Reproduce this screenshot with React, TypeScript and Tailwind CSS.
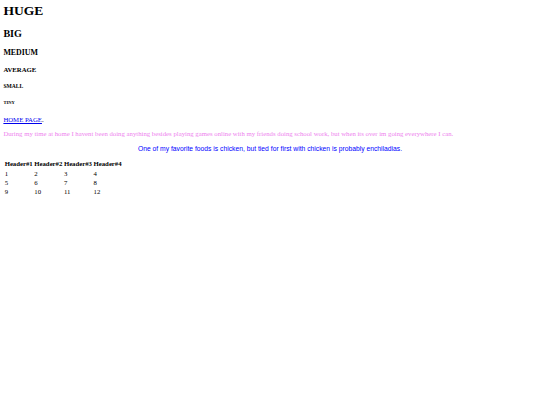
export default function App() {
  const rows = [
    ["1", "2", "3", "4"],
    ["5", "6", "7", "8"],
    ["9", "10", "11", "12"],
  ];

  return (
    <div className="min-h-[405px] bg-white p-[3.375px] font-['Liberation_Serif',serif] leading-[1.149] text-black">
      <h1 className="mb-[9.05px] text-[13.5px] font-bold">HUGE</h1>
      <h2 className="my-[8.4px] text-[10.125px] font-bold">BIG</h2>
      <h3 className="my-[7.9px] text-[7.9px] font-bold">MEDIUM</h3>
      <h4 className="my-[8.98px] text-[6.75px] font-bold">AVERAGE</h4>
      <h5 className="my-[9.35px] text-[5.6px] font-bold">SMALL</h5>
      <h6 className="my-[10.5px] text-[4.52px] font-bold">TINY</h6>

      <p className="my-[6.75px] text-[6.75px]">
        <a href="#" className="text-[#0000ee] underline">
          HOME PAGE
        </a>
        .
      </p>

      <p className="my-[6.75px] text-[6.75px] text-[#ee82ee]">
        During my time at home I havent been doing anything besides playing games online with my friends doing school
        work, but when its over im going everywhere I can.
      </p>

      <p className="my-[6.75px] text-center font-['Liberation_Sans',sans-serif] text-[6.75px] text-[#0000ff]">
        One of my favorite foods is chicken, but tied for first with chicken is probably enchiladias.
      </p>

      <table className="border-separate border-spacing-[1px] text-[6.75px]">
        <thead>
          <tr>
            <th className="px-[0.25px] py-[0.25px] text-center font-bold">Header#1</th>
            <th className="px-[0.25px] py-[0.25px] text-center font-bold">Header#2</th>
            <th className="px-[0.25px] py-[0.25px] text-center font-bold">Header#3</th>
            <th className="px-[0.25px] py-[0.25px] text-center font-bold">Header#4</th>
          </tr>
        </thead>
        <tbody>
          {rows.map((row, i) => (
            <tr key={i}>
              {row.map((cell) => (
                <td key={cell} className="px-[0.25px] py-[0.25px] text-left">
                  {cell}
                </td>
              ))}
            </tr>
          ))}
        </tbody>
      </table>
    </div>
  );
}
